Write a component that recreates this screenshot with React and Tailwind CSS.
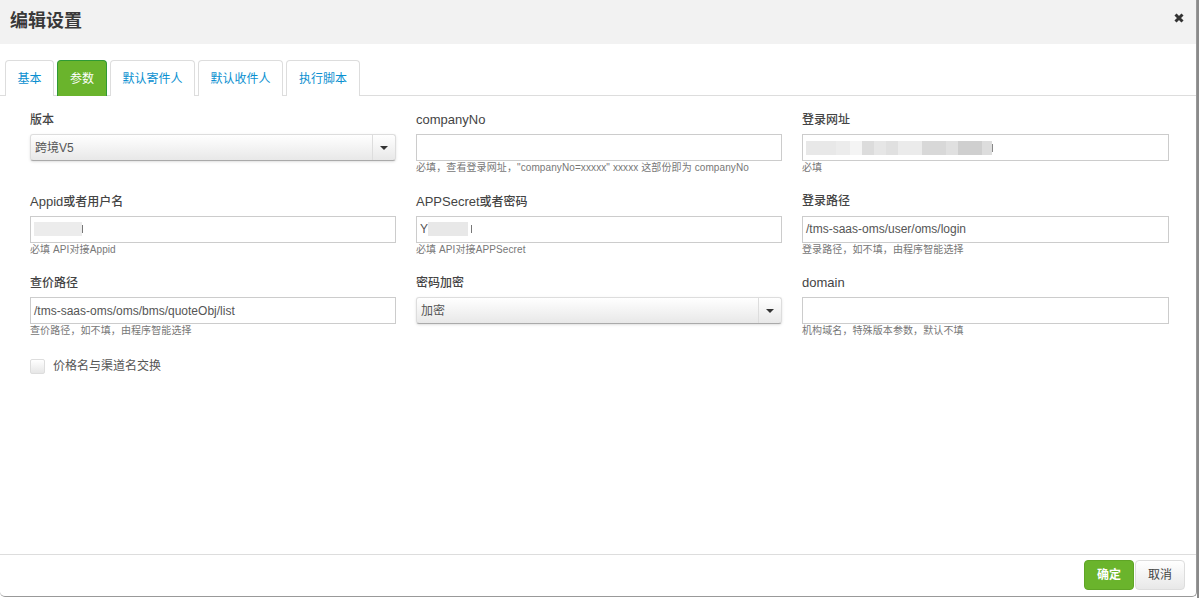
const fontStack = { fontFamily: '"Liberation Sans", "Noto Sans CJK SC", sans-serif' };

const tabs = [
    { name: "基本", w: "w-[49px]" },
    { name: "参数", w: "w-[50px]" },
    { name: "默认寄件人", w: "w-[85px]" },
    { name: "默认收件人", w: "w-[85px]" },
    { name: "执行脚本", w: "w-[74px]" },
];

const urlBlur = [
    ["w-[30px]", "bg-[#e8e8e8]"],
    ["w-[14px]", "bg-[#ececec]"],
    ["w-[12px]", "bg-[#f4f4f4]"],
    ["w-[12px]", "bg-[#dcdcdc]"],
    ["w-[12px]", "bg-[#e6e6e6]"],
    ["w-[12px]", "bg-[#e0e0e0]"],
    ["w-[24px]", "bg-[#ebebeb]"],
    ["w-[24px]", "bg-[#d8d8d8]"],
    ["w-[12px]", "bg-[#e0e0e0]"],
    ["w-[24px]", "bg-[#cfcfcf]"],
    ["w-[10px]", "bg-[#dddddd]"],
];

const Blur = ({ w, c }) => <span className={`inline-block h-[14px] ${w} ${c}`} />;

const Latin = ({ children }) => <span className="text-[13px]">{children}</span>;

const Field = ({ label, help, nudge, children }) => (
    <div className="flex flex-col">
        <label className={`h-[15px] text-[12px] leading-[15px] font-medium text-[#444] ${nudge ? "pt-px" : ""}`}>{label}</label>
        <div className="mt-[7px]">{children}</div>
        <p className="h-[13px] text-[10px] leading-[13px] tracking-[0.1px] text-[#777]">{help}</p>
    </div>
);

const TextBox = ({ children }) => (
    <div className="flex h-[27px] items-center border border-[#ccc] bg-white px-[3px] text-[12px] text-[#555]">
        {children}
    </div>
);

const SelectBox = ({ value }) => (
    <div className="flex h-[27px] items-stretch rounded-[3px] border border-[#ddd] border-b-[#aaa] bg-gradient-to-b from-white to-[#e8e8e8] text-[12px] text-[#555] shadow-sm">
        <span className="flex flex-1 items-center pl-[4px]">{value}</span>
        <span className="flex w-[23px] items-center justify-center rounded-r-[3px] border-l border-[#ddd]">
            <span className="h-0 w-0 border-x-[4px] border-t-[4px] border-x-transparent border-t-[#333]" />
        </span>
    </div>
);

export default function App() {
    return (
        <div className="flex h-[598px] w-[1199px] overflow-hidden bg-white" style={fontStack}>
            <div className="flex h-[597px] w-[1197px] flex-col rounded-b-[5px] border-r border-b border-[#999] bg-white">
                <div className="flex h-11 items-center justify-between bg-[#f2f2f2] pr-[12px] pl-[10px]">
                    <h3 className="mt-[-2px] text-[18px] font-bold text-[#393939]">编辑设置</h3>
                    <svg width="10" height="10" viewBox="0 0 10 10" className="mt-[-9px]">
                        <path d="M1.5 1.5L8.5 8.5M8.5 1.5L1.5 8.5" stroke="#333" strokeWidth="3" />
                    </svg>
                </div>

                <div className="mt-4 flex h-[36px] gap-[3px] border-b border-[#ddd] px-[5px]">
                    {tabs.map((t, i) => (
                        <div
                            key={t.name}
                            className={
                                i === 1
                                    ? `flex h-[36px] items-center justify-center rounded-t-[4px] border border-[#2f9a35] border-b-0 bg-[#6ab42c] text-[12px] text-white ${t.w}`
                                    : `flex h-[36px] items-center justify-center rounded-t-[4px] border border-[#ddd] border-b-0 bg-white text-[12px] text-[#0a8fd0] ${t.w}`
                            }
                        >
                            {t.name}
                        </div>
                    ))}
                </div>

                <div className="flex-1 px-[30px] pt-[16px]">
                    <div className="grid grid-cols-[366px_366px_367px] gap-x-[20px] gap-y-[19.5px]">
                        <Field nudge label="版本" help="">
                            <SelectBox value="跨境V5" />
                        </Field>
                        <Field label={<Latin>companyNo</Latin>} help={'必填，查看登录网址，"companyNo=xxxxx" xxxxx 这部份即为 companyNo'}>
                            <TextBox />
                        </Field>
                        <Field nudge label="登录网址" help="必填">
                            <TextBox>
                                {urlBlur.map(([w, c], i) => (
                                    <Blur key={i} w={w} c={c} />
                                ))}
                                <span className="h-[8px] w-px bg-[#888]" />
                            </TextBox>
                        </Field>
                        <Field label={<><Latin>Appid</Latin>或者用户名</>} help="必填 API对接Appid">
                            <TextBox>
                                <Blur w="w-[48px]" c="bg-[#ececec]" />
                                <span className="h-[8px] w-px bg-[#777]" />
                            </TextBox>
                        </Field>
                        <Field label={<><Latin>APPSecret</Latin>或者密码</>} help="必填 API对接APPSecret">
                            <TextBox>
                                Y
                                <Blur w="w-[40px]" c="bg-[#e8e8e8]" />
                                <span className="ml-[3px] h-[8px] w-px bg-[#777]" />
                            </TextBox>
                        </Field>
                        <Field label="登录路径" help="登录路径，如不填，由程序智能选择">
                            <TextBox>/tms-saas-oms/user/oms/login</TextBox>
                        </Field>
                        <Field nudge label="查价路径" help="查价路径，如不填，由程序智能选择">
                            <TextBox>/tms-saas-oms/oms/bms/quoteObj/list</TextBox>
                        </Field>
                        <Field nudge label="密码加密" help="">
                            <SelectBox value="加密" />
                        </Field>
                        <Field label={<Latin>domain</Latin>} help="机构域名，特殊版本参数，默认不填">
                            <TextBox />
                        </Field>
                    </div>

                    <div className="mt-[20px] flex items-center gap-[8px]">
                        <span className="h-[15px] w-[15px] rounded-[2px] border border-[#ddd] bg-gradient-to-b from-white to-[#e6e6e6]" />
                        <span className="text-[12px] text-[#555]">价格名与渠道名交换</span>
                    </div>
                </div>

                <div className="flex h-[42px] items-start justify-end gap-[1px] border-t border-[#ddd] pt-[5px] pr-[11px]">
                    <button className="h-[30px] w-[50px] rounded-[4px] border border-[#5fa526] bg-[#6ab42c] text-[12px] font-bold text-white">
                        确定
                    </button>
                    <button className="h-[30px] w-[50px] rounded-[4px] border border-[#ddd] bg-gradient-to-b from-white to-[#e8e8e8] text-[12px] text-[#444]">
                        取消
                    </button>
                </div>
            </div>
            <div className="w-[2px] bg-[#8a8a8a]" />
        </div>
    );
}
